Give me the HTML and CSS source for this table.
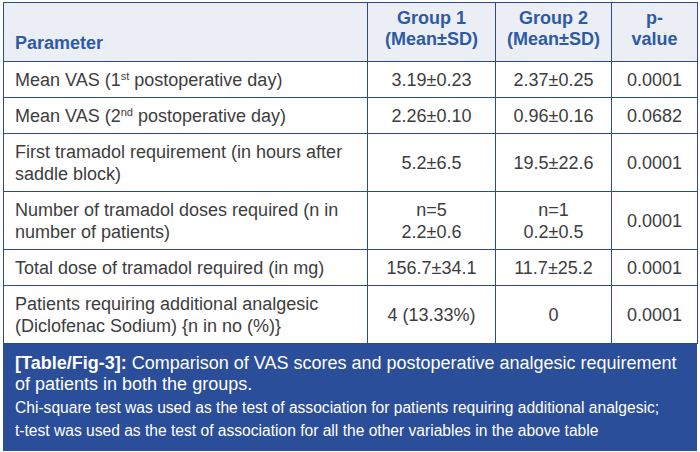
FILE: index.html
```html
<!DOCTYPE html>
<html>
<head>
<meta charset="utf-8">
<link rel="stylesheet" href="styles.css">
</head>
<body>
<div class="fig">
  <table class="tbl">
    <colgroup>
      <col class="c1"><col class="c2"><col class="c3"><col class="c4">
    </colgroup>
    <thead>
      <tr>
        <th class="param">Parameter</th>
        <th>Group 1<br>(Mean±SD)</th>
        <th>Group 2<br>(Mean±SD)</th>
        <th>p-<br>value</th>
      </tr>
    </thead>
    <tbody>
      <tr>
        <td class="param">Mean VAS (1<sup>st</sup> postoperative day)</td>
        <td>3.19±0.23</td><td>2.37±0.25</td><td>0.0001</td>
      </tr>
      <tr>
        <td class="param">Mean VAS (2<sup>nd</sup> postoperative day)</td>
        <td>2.26±0.10</td><td>0.96±0.16</td><td>0.0682</td>
      </tr>
      <tr>
        <td class="param">First tramadol requirement (in hours after saddle block)</td>
        <td>5.2±6.5</td><td>19.5±22.6</td><td>0.0001</td>
      </tr>
      <tr>
        <td class="param">Number of tramadol doses required (n in number of patients)</td>
        <td>n=5<br>2.2±0.6</td><td>n=1<br>0.2±0.5</td><td>0.0001</td>
      </tr>
      <tr>
        <td class="param">Total dose of tramadol required (in mg)</td>
        <td>156.7±34.1</td><td>11.7±25.2</td><td>0.0001</td>
      </tr>
      <tr>
        <td class="param">Patients requiring additional analgesic (Diclofenac Sodium) {n in no (%)}</td>
        <td>4 (13.33%)</td><td>0</td><td>0.0001</td>
      </tr>
    </tbody>
  </table>
  <div class="caption">
    <p class="title"><span class="tag">[Table/Fig-3]:</span> Comparison of VAS scores and postoperative analgesic requirement of patients in both the groups.</p>
    <p class="note">Chi-square test was used as the test of association for patients requiring additional analgesic;<br>t-test was used as the test of association for all the other variables in the above table</p>
  </div>
</div>
</body>
</html>
```
FILE: styles.css
```css
html, body {
  margin: 0;
  padding: 0;
  background: #ffffff;
}
body {
  font-family: "Liberation Sans", Arial, sans-serif;
  color: #3d3d3d;
}
.fig {
  width: 694px;
  padding: 2px 0 0 3px;
}
.tbl {
  width: 694px;
  border-collapse: collapse;
  table-layout: fixed;
  font-size: 18px;
}
.c1 { width: 364px; }
.c2 { width: 128px; }
.c3 { width: 116px; }
.c4 { width: 86px; }
.tbl th, .tbl td {
  border: 1px solid #2c4a8c;
  text-align: center;
  vertical-align: middle;
}
.tbl th {
  background: #eceef6;
  color: #2f5aa3;
  font-weight: bold;
  line-height: 21px;
  padding: 5px 2px 11px;
  vertical-align: top;
}
.tbl th.param {
  vertical-align: bottom;
  text-align: left;
  padding: 0 11px 7px;
}
.tbl td {
  line-height: 22px;
  padding: 6.5px 2px;
}
.tbl td.param {
  text-align: left;
  padding: 6.5px 11px;
}
.tbl sup {
  font-size: 11px;
  line-height: 0;
  vertical-align: 6px;
}
.caption {
  background: #2b4e9b;
  color: #ffffff;
  padding: 9px 8px 9px 12px;
}
.caption p {
  margin: 0;
}
.caption .title {
  font-size: 18px;
  line-height: 21px;
  padding-bottom: 2px;
}
.caption .tag {
  font-weight: bold;
}
.caption .note {
  font-size: 15.6px;
  line-height: 22.5px;
}
```
